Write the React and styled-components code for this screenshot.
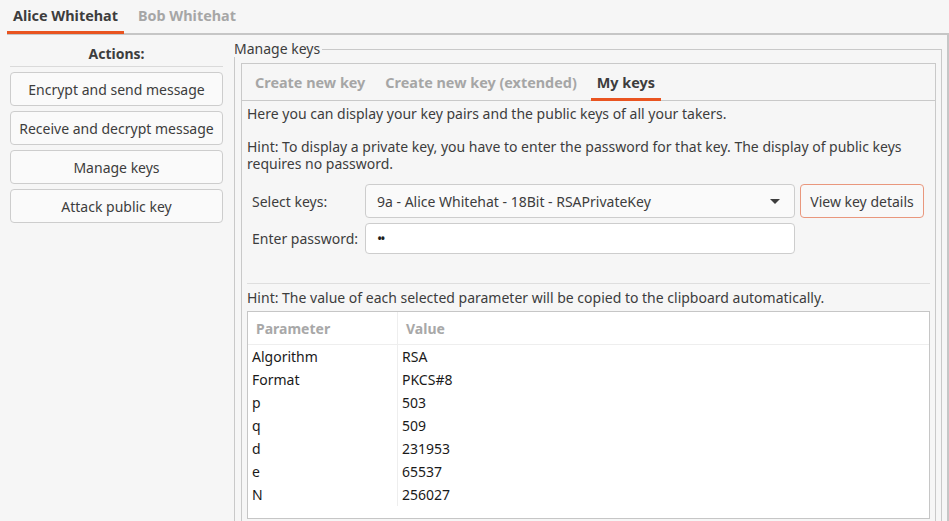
import React from 'react';
import styled, { createGlobalStyle } from 'styled-components';

const GlobalStyle = createGlobalStyle`
  html, body {
    margin: 0;
    padding: 0;
    background: #f6f6f6;
  }
  body {
    font-family: "Noto Sans", "DejaVu Sans", sans-serif;
    font-size: 14px;
    color: #3d3d3d;
  }
  * { box-sizing: border-box; }
`;

const keyParams = [
  ['Algorithm', 'RSA'],
  ['Format', 'PKCS#8'],
  ['p', '503'],
  ['q', '509'],
  ['d', '231953'],
  ['e', '65537'],
  ['N', '256027'],
];

const actions = [
  'Encrypt and send message',
  'Receive and decrypt message',
  'Manage keys',
  'Attack public key',
];

const App = () => {
  return (
    <Window>
      <GlobalStyle />
      <TopTabBar>
        <TopTab $active>Alice Whitehat</TopTab>
        <TopTab>Bob Whitehat</TopTab>
      </TopTabBar>
      <Body>
        <Sidebar>
          <ActionsTitle>Actions:</ActionsTitle>
          <ActionList>
            {actions.map((a) => (
              <ActionButton key={a}>{a}</ActionButton>
            ))}
          </ActionList>
        </Sidebar>
        <GroupBox>
          <GroupTitle>Manage keys</GroupTitle>
          <InnerTabs>
            <InnerTabBar>
              <InnerTab>Create new key</InnerTab>
              <InnerTab>Create new key (extended)</InnerTab>
              <InnerTab $active>My keys</InnerTab>
            </InnerTabBar>
            <Content>
              <Text>Here you can display your key pairs and the public keys of all your takers.</Text>
              <Hint>
                Hint: To display a private key, you have to enter the password for that key. The display of public keys
                requires no password.
              </Hint>
              <FormGrid>
                <FieldLabel>Select keys:</FieldLabel>
                <Combo>
                  <span>9a - Alice Whitehat - 18Bit - RSAPrivateKey</span>
                  <Caret />
                </Combo>
                <DetailsButton>View key details</DetailsButton>
                <FieldLabel>Enter password:</FieldLabel>
                <PasswordInput type="password" defaultValue="ab" readOnly />
              </FormGrid>
              <Separator />
              <CopyHint>Hint: The value of each selected parameter will be copied to the clipboard automatically.</CopyHint>
              <Table>
                <HeaderRow>
                  <HeaderCell $first>Parameter</HeaderCell>
                  <HeaderCell>Value</HeaderCell>
                </HeaderRow>
                {keyParams.map(([name, value]) => (
                  <Row key={name}>
                    <Cell $first>{name}</Cell>
                    <Cell>{value}</Cell>
                  </Row>
                ))}
              </Table>
            </Content>
          </InnerTabs>
        </GroupBox>
      </Body>
    </Window>
  );
};

const Window = styled.div`
  width: 949px;
  height: 521px;
  overflow: hidden;
  display: flex;
  flex-direction: column;
`;

const TopTabBar = styled.div`
  display: flex;
  height: 35px;
  margin-left: 7px;
  border-bottom: 2px solid #c6c6c6;
`;

const TopTab = styled.div`
  display: flex;
  align-items: center;
  padding: 0 6px;
  margin-right: 8px;
  margin-bottom: -1px;
  height: 34px;
  font-size: 14.4px;
  font-weight: bold;
  color: ${(p) => (p.$active ? '#3d3d3d' : '#a6a6a6')};
  border-bottom: 3px solid ${(p) => (p.$active ? '#e95420' : 'transparent')};
`;

const Body = styled.div`
  flex: 1;
  display: flex;
  margin-left: 7px;
  border-right: 2px solid #c6c6c6;
  min-height: 0;
`;

const Sidebar = styled.div`
  width: 213px;
  margin-left: 3px;
  flex-shrink: 0;
`;

const ActionsTitle = styled.div`
  padding: 10px 0 4px;
  line-height: 17px;
  text-align: center;
  font-weight: bold;
  border-bottom: 1px solid #dadada;
`;

const ActionList = styled.div`
  display: flex;
  flex-direction: column;
  gap: 5px;
  margin-top: 5px;
`;

const ActionButton = styled.button`
  height: 34px;
  font: inherit;
  color: #3d3d3d;
  background: #fafafa;
  border: 1px solid #cdcdcd;
  border-radius: 4px;
  padding: 0;
`;

const GroupBox = styled.div`
  position: relative;
  flex: 1;
  margin: 14px 5px 0 11px;
  padding: 13px 5px 0 6px;
  border: 1px solid #c9c9c9;
  border-bottom: none;
  display: flex;
  flex-direction: column;
`;

const GroupTitle = styled.div`
  position: absolute;
  top: -10px;
  left: -1px;
  padding-right: 2px;
  line-height: 17px;
  background: #f6f6f6;
`;

const InnerTabs = styled.div`
  flex: 1;
  border: 1px solid #c9c9c9;
  border-bottom: none;
  display: flex;
  flex-direction: column;
`;

const InnerTabBar = styled.div`
  display: flex;
  height: 37px;
  padding-left: 7px;
  border-bottom: 1px solid #c9c9c9;
`;

const InnerTab = styled.div`
  display: flex;
  align-items: center;
  padding: 3px 6px 0;
  margin-right: 8px;
  margin-bottom: -1px;
  font-size: 14.4px;
  font-weight: bold;
  color: ${(p) => (p.$active ? '#3d3d3d' : '#a6a6a6')};
  border-bottom: 3px solid ${(p) => (p.$active ? '#e95420' : 'transparent')};
`;

const Content = styled.div`
  padding: 4px 5px 0;
  line-height: 17px;
`;

const Text = styled.p`
  margin: 0;
`;

const Hint = styled.p`
  margin: 16px 0 0;
`;

const FormGrid = styled.div`
  display: grid;
  grid-template-columns: 108px 430px 124px;
  grid-template-rows: 34px 31px;
  column-gap: 5px;
  row-gap: 5px;
  align-items: center;
  margin-top: 12px;
  padding-left: 5px;
`;

const FieldLabel = styled.div``;

const Combo = styled.div`
  height: 34px;
  display: flex;
  align-items: center;
  justify-content: space-between;
  padding: 0 14px 0 11px;
  background: #fafafa;
  border: 1px solid #cdcdcd;
  border-radius: 4px;
`;

const Caret = styled.span`
  width: 0;
  height: 0;
  border-left: 5px solid transparent;
  border-right: 5px solid transparent;
  border-top: 5px solid #3d3d3d;
`;

const DetailsButton = styled.button`
  height: 34px;
  font: inherit;
  color: #3d3d3d;
  background: #f8f8f8;
  border: 1px solid #e9977d;
  border-radius: 4px;
  padding: 0;
`;

const PasswordInput = styled.input`
  height: 31px;
  font-family: inherit;
  font-size: 14px;
  letter-spacing: -2px;
  color: #1e1e1e;
  background: #fff;
  border: 1px solid #cdcdcd;
  border-radius: 4px;
  padding: 0 11px;
  outline: none;
`;

const Separator = styled.div`
  margin-top: 29px;
  border-top: 1px solid #dedede;
`;

const CopyHint = styled.p`
  margin: 5px 0 0;
`;

const Table = styled.div`
  margin-top: 5px;
  height: 208px;
  background: #fff;
  border: 1px solid #c6c6c6;
`;

const HeaderRow = styled.div`
  display: flex;
  height: 33px;
  border-bottom: 1px solid #eeeeee;
`;

const HeaderCell = styled.div`
  display: flex;
  align-items: center;
  width: ${(p) => (p.$first ? '150px' : 'auto')};
  padding-left: 8px;
  font-weight: bold;
  color: #a8a8a8;
  border-right: ${(p) => (p.$first ? '1px solid #eeeeee' : 'none')};
`;

const Row = styled.div`
  display: flex;
  height: 23px;
`;

const Cell = styled.div`
  display: flex;
  align-items: center;
  width: ${(p) => (p.$first ? '150px' : 'auto')};
  padding-left: 4px;
  color: #1a1a1a;
  border-right: ${(p) => (p.$first ? '1px solid #eeeeee' : 'none')};
`;

export default App;
